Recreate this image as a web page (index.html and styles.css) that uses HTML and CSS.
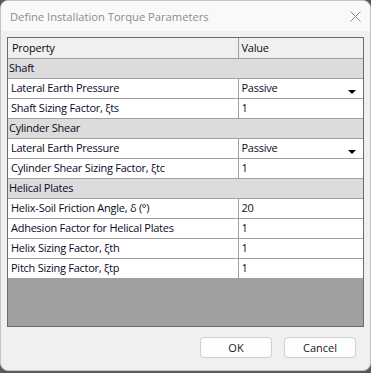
FILE: index.html
```html
<!DOCTYPE html>
<html lang="en">
<head>
    <meta charset="UTF-8">
    <title>Define Installation Torque Parameters</title>
    <link rel="stylesheet" href="styles.css">
</head>
<body>
    <div class="dlg">
        <header class="dlg-title">
            <span class="dlg-title-text">Define Installation Torque Parameters</span>
            <svg class="dlg-close" width="11" height="11" viewBox="0 0 11 11">
                <path d="M0.5 0.5 L10.5 10.5 M10.5 0.5 L0.5 10.5" stroke="#8a8a8a" stroke-width="1" fill="none"/>
            </svg>
        </header>

        <main class="dlg-body">
            <div class="grid">
                <table class="grid-table">
                    <tr class="grid-head">
                        <td class="col-prop">Property</td>
                        <td class="col-val">Value</td>
                    </tr>
                    <tr class="grid-cat"><td colspan="2">Shaft</td></tr>
                    <tr>
                        <td>Lateral Earth Pressure</td>
                        <td class="combo">Passive<span class="arrow"></span></td>
                    </tr>
                    <tr>
                        <td>Shaft Sizing Factor, ξts</td>
                        <td>1</td>
                    </tr>
                    <tr class="grid-cat"><td colspan="2">Cylinder Shear</td></tr>
                    <tr>
                        <td>Lateral Earth Pressure</td>
                        <td class="combo">Passive<span class="arrow"></span></td>
                    </tr>
                    <tr>
                        <td>Cylinder Shear Sizing Factor, ξtc</td>
                        <td>1</td>
                    </tr>
                    <tr class="grid-cat"><td colspan="2">Helical Plates</td></tr>
                    <tr>
                        <td>Helix-Soil Friction Angle, δ (°)</td>
                        <td>20</td>
                    </tr>
                    <tr>
                        <td>Adhesion Factor for Helical Plates</td>
                        <td>1</td>
                    </tr>
                    <tr>
                        <td>Helix Sizing Factor, ξth</td>
                        <td>1</td>
                    </tr>
                    <tr>
                        <td>Pitch Sizing Factor, ξtp</td>
                        <td>1</td>
                    </tr>
                </table>
            </div>

            <div class="dlg-buttons">
                <button class="dlg-btn">OK</button>
                <button class="dlg-btn">Cancel</button>
            </div>
        </main>
    </div>
</body>
</html>
```

FILE: styles.css
```css
* {
    margin: 0;
    padding: 0;
    box-sizing: border-box;
}

body {
    background-color: #5a5a5a;
    font-family: 'Open Sans', 'Liberation Sans', sans-serif;
    font-size: 11px;
    letter-spacing: -0.25px;
    width: 371px;
    height: 373px;
    overflow: hidden;
}

.dlg {
    width: 371px;
    height: 371px;
    background-color: #f0f0f0;
    border: 1px solid #c4c4c4;
    border-radius: 8px;
    overflow: hidden;
    display: flex;
    flex-direction: column;
}

.dlg-title {
    height: 30px;
    background-color: #f9f9f9;
    display: flex;
    align-items: center;
    justify-content: space-between;
    padding: 0 9px 0 9px;
}

.dlg-title-text {
    color: #8c8c8c;
    font-size: 11.2px;
    letter-spacing: 0;
}

.dlg-body {
    flex: 1;
    padding: 6px 6px 0 6px;
    display: flex;
    flex-direction: column;
}

.grid {
    width: 357px;
    height: 290px;
    background-color: #a0a0a0;
    border: 1px solid #6b6b6b;
}

.grid-table {
    width: 100%;
    border-collapse: collapse;
    table-layout: fixed;
    color: #0a0a1e;
}

.grid-table tr {
    height: 20px;
}

.grid-table td {
    height: 19px;
    padding: 0 0 0 3px;
    border-bottom: 1px solid #a0a0a0;
    background-color: #ffffff;
    white-space: nowrap;
    overflow: hidden;
    line-height: 18px;
}

.grid-table td + td {
    border-left: 1px solid #a0a0a0;
    padding-left: 3px;
}

.col-prop {
    width: 230px;
}

.grid-head {
    height: 21px;
}

.grid-head td {
    height: 20px;
    background-color: #f0f0f0;
    padding-left: 4px;
}

.grid-cat td {
    background-color: #dcdcdc;
    padding-left: 1px;
}

.combo {
    position: relative;
}

.arrow {
    position: absolute;
    right: 7px;
    top: 11px;
    width: 0;
    height: 0;
    border-left: 4px solid transparent;
    border-right: 4px solid transparent;
    border-top: 4px solid #000000;
}

.dlg-buttons {
    display: flex;
    justify-content: flex-end;
    gap: 12px;
    padding: 10px 8px 0 0;
}

.dlg-btn {
    width: 72px;
    height: 21px;
    background-color: #fdfdfd;
    border: 1px solid #d0d0d0;
    border-radius: 4px;
    font-family: 'Open Sans', 'Liberation Sans', sans-serif;
    font-size: 11px;
    letter-spacing: 0;
    color: #1a1a1a;
}
```
